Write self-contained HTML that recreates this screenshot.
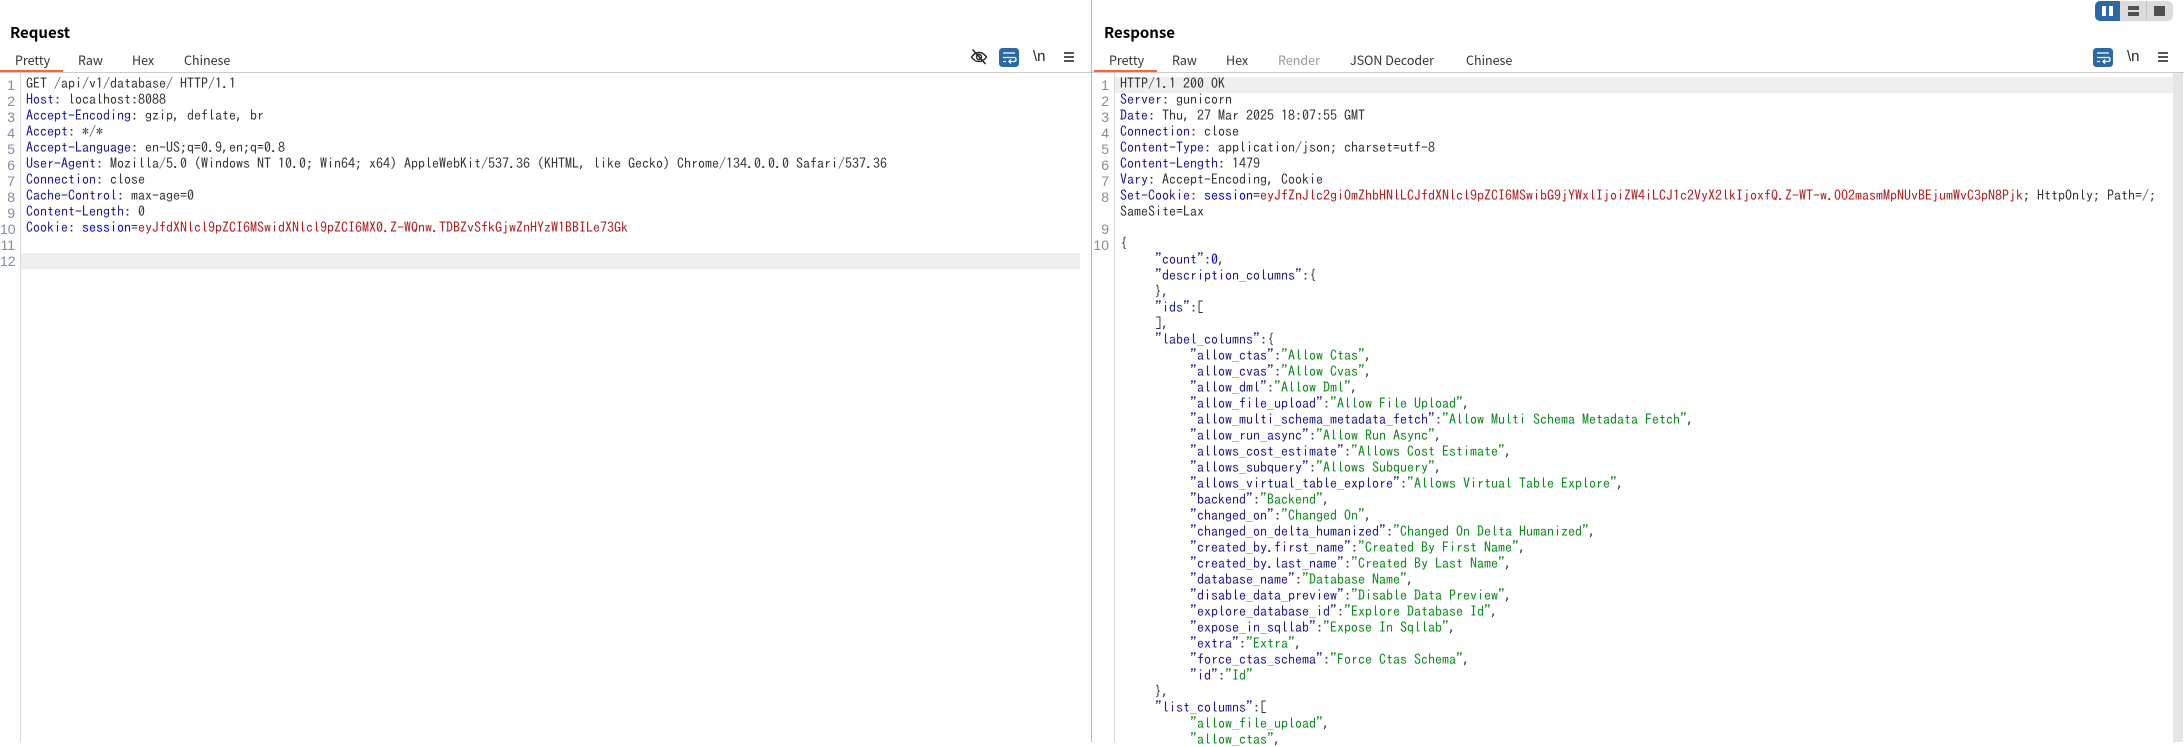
<!DOCTYPE html>
<html><head><meta charset="utf-8"><style>
html,body{margin:0;padding:0;background:#fff}
body{width:2184px;height:742px;overflow:hidden;position:relative}
.a{position:absolute}
.t{position:absolute;top:50px;font:12.5px/20px "Noto Sans CJK SC","Liberation Sans",sans-serif;color:#333;white-space:pre}
.h{position:absolute;top:22px;font:bold 15px/22px "Noto Sans CJK SC","Liberation Sans",sans-serif;color:#000}
.c{position:absolute;white-space:pre;font:14px/16px "IPAGothic","Liberation Mono",monospace;color:#333}
.n{position:absolute;text-align:right;font:14px/16px "Liberation Sans",sans-serif;color:#7f8fa0}
b{font-weight:normal;color:#1a1a8a}
i{font-style:normal;color:#0000d0}
u{text-decoration:none;color:#b01c1c}
s{text-decoration:none;color:#0a8a1a}
</style></head><body>
<!-- layout toggle -->
<div class="a" style="left:2095px;top:1px;width:78px;height:20px;background:#dcdcdc;border-radius:5px"></div>
<div class="a" style="left:2095px;top:1px;width:25px;height:20px;background:#2a69a3;border-radius:5px 0 0 5px"></div>
<div class="a" style="left:2146px;top:1px;width:1px;height:20px;background:#c6c6c6"></div>
<div class="a" style="left:2102px;top:6px;width:4px;height:10px;background:#fff"></div>
<div class="a" style="left:2109px;top:6px;width:4px;height:10px;background:#fff"></div>
<div class="a" style="left:2128px;top:6px;width:11px;height:4px;background:#505050"></div>
<div class="a" style="left:2128px;top:12px;width:11px;height:4px;background:#505050"></div>
<div class="a" style="left:2154px;top:6px;width:11px;height:10px;background:#505050"></div>
<!-- divider / header rules -->
<div class="a" style="left:1091px;top:0;width:1px;height:742px;background:#b8b8b8"></div>
<div class="a" style="left:0;top:72px;width:1091px;height:1px;background:#ccc"></div>
<div class="a" style="left:1092px;top:72px;width:1092px;height:1px;background:#ccc"></div>
<div class="a" style="left:0;top:70px;width:63px;height:2px;background:#f9643a"></div>
<div class="a" style="left:1094px;top:70px;width:63px;height:2px;background:#f9643a"></div>
<div class="a" style="left:20px;top:73px;width:1px;height:669px;background:#d8d8d8"></div>
<div class="a" style="left:1114px;top:73px;width:1px;height:669px;background:#d8d8d8"></div>
<div class="a" style="left:21px;top:253px;width:1059px;height:16px;background:#efefef"></div>
<div class="a" style="left:1115px;top:77px;width:1058px;height:16px;background:#efefef"></div>
<div class="a" style="left:2173px;top:73px;width:10px;height:669px;background:#e6e6e6"></div>
<!-- headings -->
<div class="h" style="left:10px">Request</div>
<div class="h" style="left:1104px">Response</div>
<div class="t" style="left:15px">Pretty</div>
<div class="t" style="left:78px">Raw</div>
<div class="t" style="left:132px">Hex</div>
<div class="t" style="left:184px">Chinese</div>
<div class="t" style="left:1109px">Pretty</div>
<div class="t" style="left:1172px">Raw</div>
<div class="t" style="left:1226px">Hex</div>
<div class="t" style="left:1278px;color:#999">Render</div>
<div class="t" style="left:1350px">JSON Decoder</div>
<div class="t" style="left:1466px">Chinese</div>
<!-- toolbar icons -->
<svg class="a" style="left:970px;top:48px" width="18" height="18" viewBox="0 0 18 18" fill="none" stroke="#222" stroke-width="1.4"><path d="M1.500 9C4 5.500 6.500 4.500 9 4.500S14 5.500 16.500 9C14 12.500 11.500 13.500 9 13.500S4 12.500 1.500 9Z"/><circle cx="9" cy="9" r="2.500"/><path d="M2.500 1.500L15.500 16"/></svg>
<svg class="a" style="left:999px;top:48px" width="20" height="19" viewBox="0 0 20 19"><rect width="20" height="19" rx="3.500" fill="#2a69a3"/><path d="M4 5H16M4 9.500H15.500Q17 9.500 17 11.500T15 13.500H10M12 11.500L10 13.500L12 15.500M4 13.500H7" stroke="#fff" stroke-width="1.300" fill="none"/></svg>
<div class="a" style="left:1033px;top:47px;font:15px/20px 'Liberation Sans',sans-serif;color:#222">\n</div>
<div class="a" style="left:1064px;top:52px;width:10px;height:2px;background:#555;box-shadow:0 4px #555,0 8px #555"></div>
<svg class="a" style="left:2093px;top:48px" width="20" height="19" viewBox="0 0 20 19"><rect width="20" height="19" rx="3.500" fill="#2a69a3"/><path d="M4 5H16M4 9.500H15.500Q17 9.500 17 11.500T15 13.500H10M12 11.500L10 13.500L12 15.500M4 13.500H7" stroke="#fff" stroke-width="1.300" fill="none"/></svg>
<div class="a" style="left:2127px;top:47px;font:15px/20px 'Liberation Sans',sans-serif;color:#222">\n</div>
<div class="a" style="left:2158px;top:52px;width:10px;height:2px;background:#555;box-shadow:0 4px #555,0 8px #555"></div>
<!-- request line numbers -->
<div class="n" style="left:0;top:77px;width:15px">1<br>2<br>3<br>4<br>5<br>6<br>7<br>8<br>9<br>10<br>11<br>12</div>
<!-- request code -->
<div class="c" style="left:26px;top:75px">GET /api/v1/database/ HTTP/1.1
<b>Host</b>: localhost:8088
<b>Accept-Encoding</b>: gzip, deflate, br
<b>Accept</b>: */*
<b>Accept-Language</b>: en-US;q=0.9,en;q=0.8
<b>User-Agent</b>: Mozilla/5.0 (Windows NT 10.0; Win64; x64) AppleWebKit/537.36 (KHTML, like Gecko) Chrome/134.0.0.0 Safari/537.36
<b>Connection</b>: close
<b>Cache-Control</b>: max-age=0
<b>Content-Length</b>: 0
<b>Cookie</b>: <i>session</i>=<u>eyJfdXNlcl9pZCI6MSwidXNlcl9pZCI6MX0.Z-WQnw.TDBZvSfkGjwZnHYzW1BBILe73Gk</u></div>
<!-- response line numbers -->
<div class="n" style="left:1092px;top:77px;width:17px">1<br>2<br>3<br>4<br>5<br>6<br>7<br>8<br><br>9<br>10</div>
<!-- response code -->
<div class="c" style="left:1120px;top:75px">HTTP/1.1 200 OK
<b>Server</b>: gunicorn
<b>Date</b>: Thu, 27 Mar 2025 18:07:55 GMT
<b>Connection</b>: close
<b>Content-Type</b>: application/json; charset=utf-8
<b>Content-Length</b>: 1479
<b>Vary</b>: Accept-Encoding, Cookie
<b>Set-Cookie</b>: <i>session</i>=<u>eyJfZnJlc2giOmZhbHNlLCJfdXNlcl9pZCI6MSwibG9jYWxlIjoiZW4iLCJ1c2VyX2lkIjoxfQ.Z-WT-w.OO2masmMpNUvBEjumWvC3pN8Pjk</u>; HttpOnly; Path=/;
SameSite=Lax

{
     <b>"count"</b>:<i>0</i>,
     <b>"description_columns"</b>:{
     },
     <b>"ids"</b>:[
     ],
     <b>"label_columns"</b>:{
          <b>"allow_ctas"</b>:<s>"Allow Ctas"</s>,
          <b>"allow_cvas"</b>:<s>"Allow Cvas"</s>,
          <b>"allow_dml"</b>:<s>"Allow Dml"</s>,
          <b>"allow_file_upload"</b>:<s>"Allow File Upload"</s>,
          <b>"allow_multi_schema_metadata_fetch"</b>:<s>"Allow Multi Schema Metadata Fetch"</s>,
          <b>"allow_run_async"</b>:<s>"Allow Run Async"</s>,
          <b>"allows_cost_estimate"</b>:<s>"Allows Cost Estimate"</s>,
          <b>"allows_subquery"</b>:<s>"Allows Subquery"</s>,
          <b>"allows_virtual_table_explore"</b>:<s>"Allows Virtual Table Explore"</s>,
          <b>"backend"</b>:<s>"Backend"</s>,
          <b>"changed_on"</b>:<s>"Changed On"</s>,
          <b>"changed_on_delta_humanized"</b>:<s>"Changed On Delta Humanized"</s>,
          <b>"created_by.first_name"</b>:<s>"Created By First Name"</s>,
          <b>"created_by.last_name"</b>:<s>"Created By Last Name"</s>,
          <b>"database_name"</b>:<s>"Database Name"</s>,
          <b>"disable_data_preview"</b>:<s>"Disable Data Preview"</s>,
          <b>"explore_database_id"</b>:<s>"Explore Database Id"</s>,
          <b>"expose_in_sqllab"</b>:<s>"Expose In Sqllab"</s>,
          <b>"extra"</b>:<s>"Extra"</s>,
          <b>"force_ctas_schema"</b>:<s>"Force Ctas Schema"</s>,
          <b>"id"</b>:<s>"Id"</s>
     },
     <b>"list_columns"</b>:[
          <s>"allow_file_upload"</s>,
          <s>"allow_ctas"</s>,</div>
</body></html>
